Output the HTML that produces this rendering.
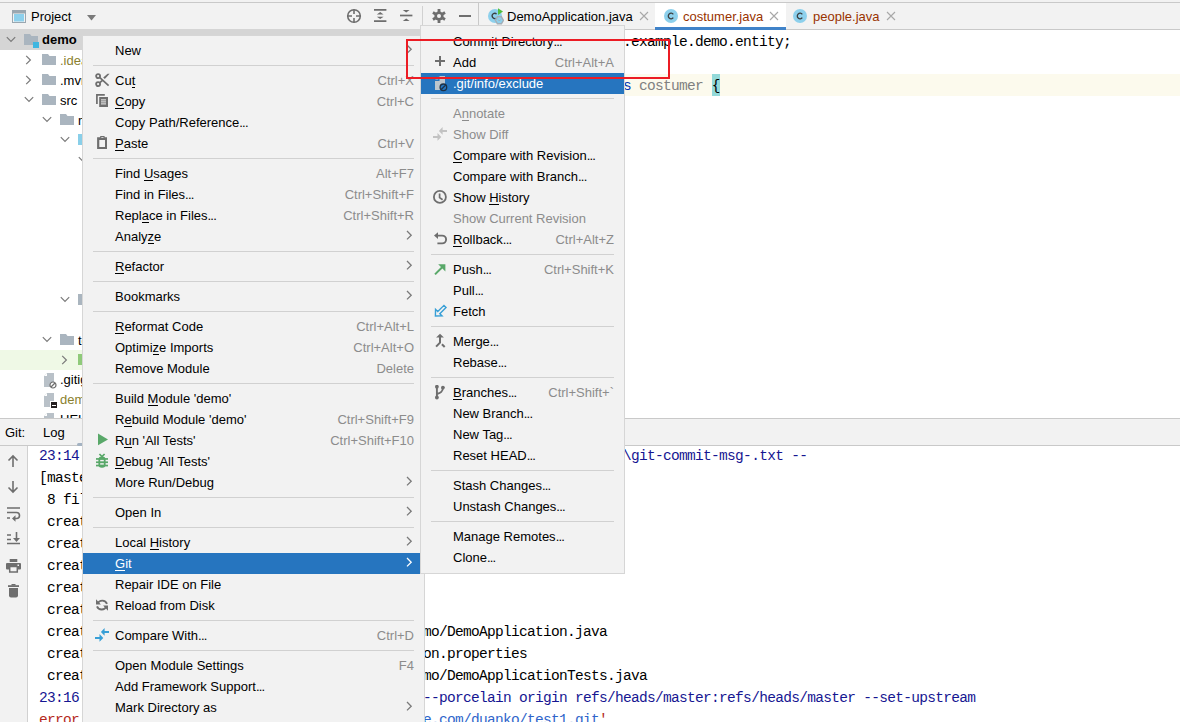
<!DOCTYPE html><html><head><meta charset="utf-8"><style>
*{margin:0;padding:0;box-sizing:border-box}
html,body{width:1180px;height:722px;overflow:hidden;background:#fff;font-family:"Liberation Sans",sans-serif;font-size:13px;color:#000}
body{position:relative}
.a{position:absolute}
.t{line-height:21px;white-space:nowrap}
.mono{position:absolute;font-family:"Liberation Mono",monospace;font-size:14.5px;letter-spacing:-0.7px;line-height:22px;white-space:pre}
.menu{position:absolute;background:#f2f2f2;border:1px solid #d6d6d6;overflow:hidden}
u{text-decoration:none;position:relative}
u:after{content:"";position:absolute;left:0;right:0;bottom:0;height:1px;background:currentColor}
</style></head><body>
<div class="a" style="left:0px;top:0px;width:1180px;height:2px;background:#f2f2f2"></div>
<div class="a" style="left:0px;top:2px;width:1180px;height:1px;background:#c9c9c9"></div>
<div class="a" style="left:0px;top:3px;width:478px;height:26px;background:#f2f2f2"></div>
<div class="a" style="left:478px;top:3px;width:702px;height:27px;background:#f2f2f2"></div>
<div class="a" style="left:478px;top:29px;width:702px;height:1px;background:#c9c9c9"></div>
<div class="a" style="left:478px;top:3px;width:1px;height:26px;background:#c9c9c9"></div>
<div class="a" style="left:655px;top:3px;width:131px;height:27px;background:#fff"></div>
<div class="a" style="left:655px;top:27px;width:131px;height:3px;background:#4083c9"></div>
<div class="a" style="left:0px;top:29px;width:540px;height:21px;background:#d5d5d5"></div>
<div class="a" style="left:540px;top:74px;width:640px;height:22px;background:#fcfaed"></div>
<div class="a" style="left:0px;top:418px;width:1180px;height:1px;background:#c9c9c9"></div>
<div class="a" style="left:0px;top:419px;width:1180px;height:26px;background:#f2f2f2"></div>
<div class="a" style="left:0px;top:445px;width:1180px;height:1px;background:#c9c9c9"></div>
<div class="a" style="left:0px;top:446px;width:27px;height:276px;background:#f2f2f2"></div>
<div class="a" style="left:27px;top:446px;width:1px;height:276px;background:#d1d1d1"></div>
<svg class="a" style="left:12px;top:10px" width="15" height="14" viewBox="0 0 15 14"><rect x="0.5" y="0.5" width="13" height="12" fill="#f2f2f2" stroke="#9aa7b0"/><rect x="0.5" y="0.5" width="13" height="3" fill="#9aa7b0"/><rect x="2" y="4" width="10" height="7.5" fill="#8dd0ec"/></svg>
<div class="a t" style="left:31px;top:6px;line-height:22px;color:#000">Project</div>
<svg class="a" style="left:87px;top:15px" width="9" height="6" viewBox="0 0 9 6"><path d="M0 0H9L4.5 5.5Z" fill="#7a7a7a"/></svg>
<svg class="a" style="left:346px;top:8px" width="16" height="16" viewBox="0 0 16 16"><circle cx="8" cy="8" r="6.3" fill="none" stroke="#6e6e6e" stroke-width="1.6"/><path d="M8 1.5V6M8 10V14.5M1.5 8H6M10 8H14.5" stroke="#6e6e6e" stroke-width="1.6"/></svg>
<svg class="a" style="left:374px;top:8px" width="13" height="15" viewBox="0 0 13 15"><path d="M0 1.9H12.4M0 13.2H12.4" stroke="#6e6e6e" stroke-width="1.7"/><path d="M2.8 6.4L6.2 4L9.6 6.4ZM2.8 8.7L6.2 11.1L9.6 8.7Z" fill="#6e6e6e"/></svg>
<svg class="a" style="left:400px;top:8px" width="13" height="15" viewBox="0 0 13 15"><path d="M0 7.5H12.4" stroke="#6e6e6e" stroke-width="1.7"/><path d="M2.8 2L6.2 4.6L9.6 2ZM2.8 13.1L6.2 10.5L9.6 13.1Z" fill="#6e6e6e"/></svg>
<div class="a" style="left:422px;top:6px;width:1px;height:20px;background:#d1d1d1"></div>
<svg class="a" style="left:432px;top:9px" width="14" height="14" viewBox="0 0 14 14"><g fill="#6e6e6e"><circle cx="7" cy="7" r="4.6"/><rect x="5.6" y="0" width="2.8" height="14"/><rect x="5.6" y="0" width="2.8" height="14" transform="rotate(60 7 7)"/><rect x="5.6" y="0" width="2.8" height="14" transform="rotate(120 7 7)"/></g><circle cx="7" cy="7" r="2" fill="#f2f2f2"/></svg>
<div class="a" style="left:459px;top:15px;width:12px;height:2px;background:#6e6e6e"></div>
<svg class="a" style="left:488px;top:8px" width="16" height="17" viewBox="0 0 16 17"><circle cx="7" cy="8" r="7" fill="#8dd0ec"/><path d="M8.6 6.1A2.6 2.6 0 1 0 7.6 10.4" fill="none" stroke="#3c3f41" stroke-width="1.3"/><path d="M10 0.2L15 3.6L10 7Z" fill="#4fbe3f"/><path d="M9.4 8.8L13.4 8.8L15.4 12.3L13.4 15.8L9.4 15.8L7.4 12.3Z" fill="#8dd0ec" stroke="#a3aeb7" stroke-width="1.4"/><path d="M10.2 11.6L11.4 13L12.6 11.6" fill="none" stroke="#a3aeb7" stroke-width="1"/></svg>
<div class="a t" style="left:507px;top:6px;color:#000">DemoApplication.java</div>
<svg class="a" style="left:639px;top:11px" width="10" height="10" viewBox="0 0 10 10"><path d="M1 1L9 9M9 1L1 9" stroke="#a8a8a8" stroke-width="1.1"/></svg>
<svg class="a" style="left:664px;top:9px" width="15" height="15" viewBox="0 0 15 15"><circle cx="7" cy="7" r="7" fill="#8dd0ec"/><path d="M9.3 5.3A2.8 2.8 0 1 0 9.3 8.7" fill="none" stroke="#3c3f41" stroke-width="1.3"/></svg>
<div class="a t" style="left:683px;top:6px;color:#993300">costumer.java</div>
<svg class="a" style="left:769px;top:11px" width="10" height="10" viewBox="0 0 10 10"><path d="M1 1L9 9M9 1L1 9" stroke="#a8a8a8" stroke-width="1.1"/></svg>
<svg class="a" style="left:793px;top:9px" width="15" height="15" viewBox="0 0 15 15"><circle cx="7" cy="7" r="7" fill="#8dd0ec"/><path d="M9.3 5.3A2.8 2.8 0 1 0 9.3 8.7" fill="none" stroke="#3c3f41" stroke-width="1.3"/></svg>
<div class="a t" style="left:813px;top:6px;color:#993300">people.java</div>
<svg class="a" style="left:886px;top:11px" width="10" height="10" viewBox="0 0 10 10"><path d="M1 1L9 9M9 1L1 9" stroke="#a8a8a8" stroke-width="1.1"/></svg>
<svg class="a" style="left:6px;top:36px" width="10" height="7" viewBox="0 0 10 7"><path d="M0.8 1.2L5 5.4L9.2 1.2" fill="none" stroke="#7a7a7a" stroke-width="1.2"/></svg>
<svg class="a" style="left:24px;top:34px" width="14" height="11" viewBox="0 0 14 11"><path d="M0 0H6L7.5 2H14V11H0Z" fill="#aab5bf"/></svg>
<div class="a" style="left:33px;top:42px;width:6px;height:6px;background:#40b6e0"></div>
<div class="a t" style="left:42px;top:29px;font-weight:bold">demo</div>
<svg class="a" style="left:25px;top:55px" width="7" height="10" viewBox="0 0 7 10"><path d="M1.2 0.8L5.4 5L1.2 9.2" fill="none" stroke="#7a7a7a" stroke-width="1.2"/></svg>
<svg class="a" style="left:42px;top:54px" width="14" height="11" viewBox="0 0 14 11"><path d="M0 0H6L7.5 2H14V11H0Z" fill="#aab5bf"/></svg>
<div class="a t" style="left:60px;top:50px;color:#8a7f2f">.idea</div>
<svg class="a" style="left:25px;top:75px" width="7" height="10" viewBox="0 0 7 10"><path d="M1.2 0.8L5.4 5L1.2 9.2" fill="none" stroke="#7a7a7a" stroke-width="1.2"/></svg>
<svg class="a" style="left:42px;top:74px" width="14" height="11" viewBox="0 0 14 11"><path d="M0 0H6L7.5 2H14V11H0Z" fill="#aab5bf"/></svg>
<div class="a t" style="left:60px;top:70px;color:#000">.mvn</div>
<svg class="a" style="left:24px;top:96px" width="10" height="7" viewBox="0 0 10 7"><path d="M0.8 1.2L5 5.4L9.2 1.2" fill="none" stroke="#7a7a7a" stroke-width="1.2"/></svg>
<svg class="a" style="left:42px;top:94px" width="14" height="11" viewBox="0 0 14 11"><path d="M0 0H6L7.5 2H14V11H0Z" fill="#aab5bf"/></svg>
<div class="a t" style="left:60px;top:90px;color:#000">src</div>
<svg class="a" style="left:42px;top:116px" width="10" height="7" viewBox="0 0 10 7"><path d="M0.8 1.2L5 5.4L9.2 1.2" fill="none" stroke="#7a7a7a" stroke-width="1.2"/></svg>
<svg class="a" style="left:60px;top:114px" width="14" height="11" viewBox="0 0 14 11"><path d="M0 0H6L7.5 2H14V11H0Z" fill="#aab5bf"/></svg>
<div class="a t" style="left:78px;top:110px;color:#000">main</div>
<svg class="a" style="left:60px;top:136px" width="10" height="7" viewBox="0 0 10 7"><path d="M0.8 1.2L5 5.4L9.2 1.2" fill="none" stroke="#7a7a7a" stroke-width="1.2"/></svg>
<svg class="a" style="left:78px;top:134px" width="14" height="11" viewBox="0 0 14 11"><path d="M0 0H6L7.5 2H14V11H0Z" fill="#89cfe9"/></svg>
<svg class="a" style="left:78px;top:156px" width="10" height="7" viewBox="0 0 10 7"><path d="M0.8 1.2L5 5.4L9.2 1.2" fill="none" stroke="#7a7a7a" stroke-width="1.2"/></svg>
<svg class="a" style="left:60px;top:296px" width="10" height="7" viewBox="0 0 10 7"><path d="M0.8 1.2L5 5.4L9.2 1.2" fill="none" stroke="#7a7a7a" stroke-width="1.2"/></svg>
<svg class="a" style="left:78px;top:294px" width="14" height="11" viewBox="0 0 14 11"><path d="M0 0H6L7.5 2H14V11H0Z" fill="#aab5bf"/></svg>
<svg class="a" style="left:42px;top:336px" width="10" height="7" viewBox="0 0 10 7"><path d="M0.8 1.2L5 5.4L9.2 1.2" fill="none" stroke="#7a7a7a" stroke-width="1.2"/></svg>
<svg class="a" style="left:60px;top:334px" width="14" height="11" viewBox="0 0 14 11"><path d="M0 0H6L7.5 2H14V11H0Z" fill="#aab5bf"/></svg>
<div class="a t" style="left:78px;top:330px">test</div>
<div class="a" style="left:0;top:350px;width:540px;height:20px;background:#eff9e6"></div>
<svg class="a" style="left:61px;top:355px" width="7" height="10" viewBox="0 0 7 10"><path d="M1.2 0.8L5.4 5L1.2 9.2" fill="none" stroke="#7a7a7a" stroke-width="1.2"/></svg>
<svg class="a" style="left:78px;top:354px" width="14" height="11" viewBox="0 0 14 11"><path d="M0 0H6L7.5 2H14V11H0Z" fill="#8fca7a"/></svg>
<svg class="a" style="left:44px;top:373px" width="11" height="14" viewBox="0 0 11 14"><path d="M0 3L3 0H10V14H0Z" fill="#b9c1c8"/><path d="M0 3L3 0V3Z" fill="#fff"/></svg>
<svg class="a" style="left:49px;top:381px" width="8" height="8" viewBox="0 0 8 8"><circle cx="4" cy="4" r="3" fill="#fff" stroke="#6e6e6e" stroke-width="1.2"/><path d="M2 6L6 2" stroke="#6e6e6e" stroke-width="1.2"/></svg>
<div class="a t" style="left:60px;top:369px">.gitignore</div>
<svg class="a" style="left:44px;top:393px" width="11" height="14" viewBox="0 0 11 14"><path d="M0 3L3 0H10V14H0Z" fill="#b9c1c8"/><path d="M0 3L3 0V3Z" fill="#fff"/></svg>
<div class="a" style="left:50px;top:401px;width:8px;height:8px;background:#fff"></div><div class="a" style="left:51px;top:402px;width:6px;height:6px;background:#231f20"></div><div class="a" style="left:52px;top:405px;width:4px;height:1px;background:#fff"></div>
<div class="a t" style="left:60px;top:389px;color:#8a7f2f">demo.iml</div>
<svg class="a" style="left:44px;top:413px" width="11" height="14" viewBox="0 0 11 14"><path d="M0 3L3 0H10V14H0Z" fill="#b9c1c8"/><path d="M0 3L3 0V3Z" fill="#fff"/></svg>
<div class="a t" style="left:60px;top:409px">HELP.md</div>
<div class="a" style="left:0;top:418px;width:1180px;height:1px;background:#c9c9c9"></div>
<div class="a" style="left:0;top:419px;width:1180px;height:26px;background:#f2f2f2"></div>
<div class="a" style="left:0;top:445px;width:1180px;height:1px;background:#c9c9c9"></div>
<div class="a t" style="left:5px;top:422px">Git:</div>
<div class="a t" style="left:43px;top:422px">Log</div>
<div class="a" style="left:77px;top:443px;width:8px;height:3px;border-radius:1.5px;background:#a3b2c2"></div>
<svg class="a" style="left:7px;top:454px" width="12" height="14" viewBox="0 0 12 14"><path d="M6 13V2M1.5 6.5L6 2L10.5 6.5" fill="none" stroke="#6e6e6e" stroke-width="1.6"/></svg>
<svg class="a" style="left:7px;top:480px" width="12" height="14" viewBox="0 0 12 14"><path d="M6 1V12M1.5 7.5L6 12L10.5 7.5" fill="none" stroke="#6e6e6e" stroke-width="1.6"/></svg>
<svg class="a" style="left:7px;top:507px" width="14" height="15" viewBox="0 0 14 15"><path d="M0 1H13M0 5.5H9.5A3 3 0 0 1 9.5 11.5H7M0 11H3" fill="none" stroke="#6e6e6e" stroke-width="1.6"/><path d="M5 11.5L8.5 8.3V14.7Z" fill="#6e6e6e"/></svg>
<svg class="a" style="left:7px;top:532px" width="14" height="14" viewBox="0 0 14 14"><path d="M0 3H4M0 7.5H4M0 11.5H13M9.5 0V8" fill="none" stroke="#6e6e6e" stroke-width="1.6"/><path d="M6 6L9.5 10L13 6Z" fill="#6e6e6e"/></svg>
<svg class="a" style="left:6px;top:559px" width="15" height="14" viewBox="0 0 15 14"><rect x="3.7" y="0" width="7.6" height="3" fill="#6e6e6e"/><rect x="0" y="4" width="15" height="6.5" rx="1" fill="#6e6e6e"/><rect x="3.7" y="7.5" width="7.6" height="5.5" fill="#f2f2f2" stroke="#6e6e6e" stroke-width="1.5"/><rect x="11.5" y="5.5" width="1.5" height="1.5" fill="#f2f2f2"/></svg>
<svg class="a" style="left:8px;top:584px" width="11" height="14" viewBox="0 0 11 14"><rect x="0" y="1.2" width="11" height="1.8" fill="#6e6e6e"/><rect x="3.5" y="0" width="4" height="1.5" fill="#6e6e6e"/><path d="M1 4H10V11.5Q10 13.5 8 13.5H3Q1 13.5 1 11.5Z" fill="#6e6e6e"/></svg>
<div class="a" style="left:712px;top:74px;width:8px;height:22px;background:#93d9d9"></div>
<div class="mono" style="left:535px;top:31px"><span style="color:#0033b3">package</span> com.example.demo.entity;</div>
<div class="mono" style="left:535px;top:75px"><span style="color:#0033b3">public class</span> <span style="color:#808080">costumer</span> <span style="position:relative;left:0.6px">{</span></div>
<div class="mono" style="left:39px;top:445px"><span style="color:#161692">23:14:38.785: [demo] git -c credential.helper= -c core.quotepath=false -c\git-commit-msg-.txt --</span>
[master (root-commit) 4a6c2b1] first commit
 8 files changed, 442 insertions(+)
 create mode 100644 .gitignore
 create mode 100644 .mvn/wrapper/maven-wra
 create mode 100644 .mvn/wrapper/maven-wrapp
 create mode 100644 mvnw
 create mode 100644 mvnw.cmd
 create mode 100644 src/main/java/com/example/demo/DemoApplication.java
 create mode 100644 src/main/resources/application.properties
 create mode 100644 src/test/java/com/example/demo/DemoApplicationTests.java
<span style="color:#161692">23:16:02.114: [demo] git -c credential.helper= ---porcelain origin refs/heads/master:refs/heads/master --set-upstream</span>
<span style="color:#b52a1e">error: failed to push some refs to 'xxxxx-xxgite</span><span style="color:#2f65ca">e.com/duanko/test1.git</span><span style="color:#b52a1e">'</span></div>
<div class="menu" style="left:82px;top:35px;width:343px;height:700px">
<div class="a t" style="left:32px;top:4px;color:#000">New</div>
<svg class="a" style="left:323px;top:8px" width="7" height="11" viewBox="0 0 7 11"><path d="M1 1L5.2 5.2L1 9.4" fill="none" stroke="#7a7a7a" stroke-width="1.3"/></svg>
<div class="a" style="left:10px;top:29px;width:321px;height:1px;background:#d1d1d1"></div>
<div class="a t" style="left:32px;top:34px;color:#000">Cu<u>t</u></div>
<div class="a t" style="right:10px;top:34px;color:#8c8c8c">Ctrl+X</div>
<svg class="a" style="left:12px;top:37px" width="16" height="16" viewBox="0 0 16 16"><circle cx="3.1" cy="3.1" r="2" fill="none" stroke="#6e6e6e" stroke-width="1.8"/><circle cx="3.1" cy="11.1" r="2" fill="none" stroke="#6e6e6e" stroke-width="1.8"/><path d="M4.6 4.4L13.6 12.6M4.6 9.8L7.4 7.4" stroke="#6e6e6e" stroke-width="1.7"/><path d="M8.2 4.6L12.6 0.8H14.6L9.8 6Z" fill="#6e6e6e"/></svg>
<div class="a t" style="left:32px;top:55px;color:#000"><u>C</u>opy</div>
<div class="a t" style="right:10px;top:55px;color:#8c8c8c">Ctrl+C</div>
<svg class="a" style="left:12px;top:57px" width="16" height="16" viewBox="0 0 16 16"><path d="M1.9 11V1.8H9.8" fill="none" stroke="#6e6e6e" stroke-width="1.7"/><rect x="4.2" y="4" width="8.8" height="10" fill="#6e6e6e"/><path d="M6 6.9h5M6 8.9h5M6 10.9h5" stroke="#f2f2f2" stroke-width="1"/></svg>
<div class="a t" style="left:32px;top:76px;color:#000">Copy Path/Reference<span style="letter-spacing:-0.8px">..</span>.</div>
<div class="a t" style="left:32px;top:97px;color:#000"><u>P</u>aste</div>
<div class="a t" style="right:10px;top:97px;color:#8c8c8c">Ctrl+V</div>
<svg class="a" style="left:13px;top:99px" width="16" height="16" viewBox="0 0 16 16"><path fill-rule="evenodd" d="M1.1 2.3H4.2V1H8.6V2.3H11V14H1.1Z M3.3 4.9V11.9H9V4.9Z M5.3 1.9V2.7H7.5V1.9Z" fill="#6e6e6e"/></svg>
<div class="a" style="left:10px;top:122px;width:321px;height:1px;background:#d1d1d1"></div>
<div class="a t" style="left:32px;top:127px;color:#000">Find <u>U</u>sages</div>
<div class="a t" style="right:10px;top:127px;color:#8c8c8c">Alt+F7</div>
<div class="a t" style="left:32px;top:148px;color:#000">Find in Files<span style="letter-spacing:-0.8px">..</span>.</div>
<div class="a t" style="right:10px;top:148px;color:#8c8c8c">Ctrl+Shift+F</div>
<div class="a t" style="left:32px;top:169px;color:#000">Repl<u>a</u>ce in Files<span style="letter-spacing:-0.8px">..</span>.</div>
<div class="a t" style="right:10px;top:169px;color:#8c8c8c">Ctrl+Shift+R</div>
<div class="a t" style="left:32px;top:190px;color:#000">Analy<u>z</u>e</div>
<svg class="a" style="left:323px;top:194px" width="7" height="11" viewBox="0 0 7 11"><path d="M1 1L5.2 5.2L1 9.4" fill="none" stroke="#7a7a7a" stroke-width="1.3"/></svg>
<div class="a" style="left:10px;top:215px;width:321px;height:1px;background:#d1d1d1"></div>
<div class="a t" style="left:32px;top:220px;color:#000"><u>R</u>efactor</div>
<svg class="a" style="left:323px;top:224px" width="7" height="11" viewBox="0 0 7 11"><path d="M1 1L5.2 5.2L1 9.4" fill="none" stroke="#7a7a7a" stroke-width="1.3"/></svg>
<div class="a" style="left:10px;top:245px;width:321px;height:1px;background:#d1d1d1"></div>
<div class="a t" style="left:32px;top:250px;color:#000">Bookmarks</div>
<svg class="a" style="left:323px;top:254px" width="7" height="11" viewBox="0 0 7 11"><path d="M1 1L5.2 5.2L1 9.4" fill="none" stroke="#7a7a7a" stroke-width="1.3"/></svg>
<div class="a" style="left:10px;top:275px;width:321px;height:1px;background:#d1d1d1"></div>
<div class="a t" style="left:32px;top:280px;color:#000"><u>R</u>eformat Code</div>
<div class="a t" style="right:10px;top:280px;color:#8c8c8c">Ctrl+Alt+L</div>
<div class="a t" style="left:32px;top:301px;color:#000">Optimi<u>z</u>e Imports</div>
<div class="a t" style="right:10px;top:301px;color:#8c8c8c">Ctrl+Alt+O</div>
<div class="a t" style="left:32px;top:322px;color:#000">Remove Module</div>
<div class="a t" style="right:10px;top:322px;color:#8c8c8c">Delete</div>
<div class="a" style="left:10px;top:347px;width:321px;height:1px;background:#d1d1d1"></div>
<div class="a t" style="left:32px;top:352px;color:#000">Build <u>M</u>odule 'demo'</div>
<div class="a t" style="left:32px;top:373px;color:#000">R<u>e</u>build Module 'demo'</div>
<div class="a t" style="right:10px;top:373px;color:#8c8c8c">Ctrl+Shift+F9</div>
<div class="a t" style="left:32px;top:394px;color:#000">R<u>u</u>n 'All Tests'</div>
<div class="a t" style="right:10px;top:394px;color:#8c8c8c">Ctrl+Shift+F10</div>
<svg class="a" style="left:13px;top:397px" width="16" height="16" viewBox="0 0 16 16"><path d="M2 0.5L12 6.4L2 12.3Z" fill="#59a869"/></svg>
<div class="a t" style="left:32px;top:415px;color:#000"><u>D</u>ebug 'All Tests'</div>
<svg class="a" style="left:13px;top:417px" width="16" height="16" viewBox="0 0 16 16"><g fill="#59a869"><path d="M3.4 1L6 3.6L8.6 1" fill="none" stroke="#59a869" stroke-width="1.7"/><rect x="2.4" y="3.4" width="7.2" height="11.3" rx="3.4" ry="3"/><rect x="0" y="5.1" width="12" height="1.7"/><rect x="0" y="8.4" width="12" height="1.7"/><rect x="0" y="11.7" width="12" height="1.7"/></g><rect x="4.2" y="6.9" width="3.6" height="1.4" fill="#f2f2f2"/><rect x="4.2" y="10.2" width="3.6" height="1.4" fill="#f2f2f2"/></svg>
<div class="a t" style="left:32px;top:436px;color:#000">More Run/Debug</div>
<svg class="a" style="left:323px;top:440px" width="7" height="11" viewBox="0 0 7 11"><path d="M1 1L5.2 5.2L1 9.4" fill="none" stroke="#7a7a7a" stroke-width="1.3"/></svg>
<div class="a" style="left:10px;top:461px;width:321px;height:1px;background:#d1d1d1"></div>
<div class="a t" style="left:32px;top:466px;color:#000">Open In</div>
<svg class="a" style="left:323px;top:470px" width="7" height="11" viewBox="0 0 7 11"><path d="M1 1L5.2 5.2L1 9.4" fill="none" stroke="#7a7a7a" stroke-width="1.3"/></svg>
<div class="a" style="left:10px;top:491px;width:321px;height:1px;background:#d1d1d1"></div>
<div class="a t" style="left:32px;top:496px;color:#000">Local <u>H</u>istory</div>
<svg class="a" style="left:323px;top:500px" width="7" height="11" viewBox="0 0 7 11"><path d="M1 1L5.2 5.2L1 9.4" fill="none" stroke="#7a7a7a" stroke-width="1.3"/></svg>
<div class="a" style="left:0;top:517px;width:343px;height:21px;background:#2675bf"></div>
<div class="a t" style="left:32px;top:517px;color:#fff"><u>G</u>it</div>
<svg class="a" style="left:323px;top:521px" width="7" height="11" viewBox="0 0 7 11"><path d="M1 1L5.2 5.2L1 9.4" fill="none" stroke="#fff" stroke-width="1.3"/></svg>
<div class="a t" style="left:32px;top:538px;color:#000">Repair IDE on File</div>
<div class="a t" style="left:32px;top:559px;color:#000">Reload from Disk</div>
<svg class="a" style="left:13px;top:561px" width="16" height="16" viewBox="0 0 16 16"><path d="M1.6 6.6A5.1 5.1 0 0 1 11 6.8M1 9.3A5.1 5.1 0 0 0 10.4 9.4" fill="none" stroke="#6e6e6e" stroke-width="1.9"/><path d="M0 2.3V7.4H4.9Z M12 13.7V8.6H7.1Z" fill="#6e6e6e"/></svg>
<div class="a" style="left:10px;top:584px;width:321px;height:1px;background:#d1d1d1"></div>
<div class="a t" style="left:32px;top:589px;color:#000">Compare With<span style="letter-spacing:-0.8px">..</span>.</div>
<div class="a t" style="right:10px;top:589px;color:#8c8c8c">Ctrl+D</div>
<svg class="a" style="left:12px;top:592px" width="16" height="16" viewBox="0 0 16 16"><path d="M5.9 3.9L9.6 0V2.9H14V4.9H9.6V7.8Z M8.3 9.9L4.5 6V8.9H0V10.9H4.5V13.8Z" fill="#389fd6"/></svg>
<div class="a" style="left:10px;top:614px;width:321px;height:1px;background:#d1d1d1"></div>
<div class="a t" style="left:32px;top:619px;color:#000">Open Module Settings</div>
<div class="a t" style="right:10px;top:619px;color:#8c8c8c">F4</div>
<div class="a t" style="left:32px;top:640px;color:#000">Add Framework Support<span style="letter-spacing:-0.8px">..</span>.</div>
<div class="a t" style="left:32px;top:661px;color:#000">Mark Directory as</div>
<svg class="a" style="left:323px;top:665px" width="7" height="11" viewBox="0 0 7 11"><path d="M1 1L5.2 5.2L1 9.4" fill="none" stroke="#7a7a7a" stroke-width="1.3"/></svg>
</div>
<div class="menu" style="left:420px;top:25px;width:205px;height:549px">
<div class="a t" style="left:32px;top:5px;color:#000">Comm<u>i</u>t Directory<span style="letter-spacing:-0.8px">..</span>.</div>
<div class="a t" style="left:32px;top:26px;color:#000">Add</div>
<div class="a t" style="right:10px;top:26px;color:#8c8c8c">Ctrl+Alt+A</div>
<svg class="a" style="left:14px;top:30px" width="16" height="16" viewBox="0 0 16 16"><path d="M5 0v10M0 5h10" stroke="#6e6e6e" stroke-width="2"/></svg>
<div class="a" style="left:0;top:47px;width:205px;height:21px;background:#2675bf"></div>
<div class="a t" style="left:32px;top:47px;color:#fff">.git/info/exclude</div>
<svg class="a" style="left:14px;top:50px" width="16" height="16" viewBox="0 0 16 16"><path d="M0 5H4.5V0H10V14H0Z" fill="#bcc5cd"/><path d="M0.2 3.4L3.2 0.4V3.4Z" fill="#bcc5cd"/><circle cx="8.4" cy="11.3" r="3.3" fill="#2675bf" stroke="#1d3045" stroke-width="1.3"/><path d="M6.2 13.5L10.6 9.1" stroke="#1d3045" stroke-width="1.3"/></svg>
<div class="a" style="left:10px;top:72px;width:183px;height:1px;background:#d1d1d1"></div>
<div class="a t" style="left:32px;top:77px;color:#8c8c8c">A<u>n</u>notate</div>
<div class="a t" style="left:32px;top:98px;color:#8c8c8c">Show Diff</div>
<svg class="a" style="left:12px;top:101px" width="16" height="16" viewBox="0 0 16 16"><path d="M5.9 3.9L9.6 0V2.9H14V4.9H9.6V7.8Z M8.3 9.9L4.5 6V8.9H0V10.9H4.5V13.8Z" fill="#c2c2c2"/></svg>
<div class="a t" style="left:32px;top:119px;color:#000"><u>C</u>ompare with Revision<span style="letter-spacing:-0.8px">..</span>.</div>
<div class="a t" style="left:32px;top:140px;color:#000">Compare with Branch<span style="letter-spacing:-0.8px">..</span>.</div>
<div class="a t" style="left:32px;top:161px;color:#000">Show <u>H</u>istory</div>
<svg class="a" style="left:12px;top:164px" width="16" height="16" viewBox="0 0 16 16"><circle cx="6.9" cy="6.9" r="6" fill="none" stroke="#6e6e6e" stroke-width="1.8"/><path d="M6.6 3.6V7.6L9.6 9.8" fill="none" stroke="#6e6e6e" stroke-width="1.7"/></svg>
<div class="a t" style="left:32px;top:182px;color:#8c8c8c">Show Current Revision</div>
<div class="a t" style="left:32px;top:203px;color:#000"><u>R</u>ollback<span style="letter-spacing:-0.8px">..</span>.</div>
<div class="a t" style="right:10px;top:203px;color:#8c8c8c">Ctrl+Alt+Z</div>
<svg class="a" style="left:13px;top:206px" width="16" height="16" viewBox="0 0 16 16"><path d="M3 3.6H8.2A3.9 3.9 0 0 1 8.2 11.4H3.4" fill="none" stroke="#6e6e6e" stroke-width="1.9"/><path d="M0 3.6L4 0.2V7Z" fill="#6e6e6e"/></svg>
<div class="a" style="left:10px;top:228px;width:183px;height:1px;background:#d1d1d1"></div>
<div class="a t" style="left:32px;top:233px;color:#000">Push<span style="letter-spacing:-0.8px">..</span>.</div>
<div class="a t" style="right:10px;top:233px;color:#8c8c8c">Ctrl+Shift+K</div>
<svg class="a" style="left:13px;top:238px" width="16" height="16" viewBox="0 0 16 16"><path d="M1 10.4L9.2 2.2" stroke="#59a869" stroke-width="2"/><path d="M4.2 0.2H11.4V7.4Z" fill="#59a869"/></svg>
<div class="a t" style="left:32px;top:254px;color:#000">Pull<span style="letter-spacing:-0.8px">..</span>.</div>
<div class="a t" style="left:32px;top:275px;color:#000">Fetch</div>
<svg class="a" style="left:12px;top:277px" width="16" height="16" viewBox="0 0 16 16"><path d="M10.97 2.37 L4.77 8.58 L2.54 6.35 L2.40 13.00 L9.05 12.86 L6.82 10.63 L13.03 4.43Z" fill="none" stroke="#389fd6" stroke-width="1.4" stroke-linejoin="miter"/></svg>
<div class="a" style="left:10px;top:300px;width:183px;height:1px;background:#d1d1d1"></div>
<div class="a t" style="left:32px;top:305px;color:#000">Merge<span style="letter-spacing:-0.8px">..</span>.</div>
<svg class="a" style="left:14px;top:307px" width="16" height="16" viewBox="0 0 16 16"><path d="M5 4V9.6L1.1 13.6M6.9 11.3L9.7 14" fill="none" stroke="#6e6e6e" stroke-width="2"/><path d="M1.1 4.6L5 0.8L8.9 4.6Z" fill="#6e6e6e"/></svg>
<div class="a t" style="left:32px;top:326px;color:#000">Rebase<span style="letter-spacing:-0.8px">..</span>.</div>
<div class="a" style="left:10px;top:351px;width:183px;height:1px;background:#d1d1d1"></div>
<div class="a t" style="left:32px;top:356px;color:#000"><u>B</u>ranches<span style="letter-spacing:-0.8px">..</span>.</div>
<div class="a t" style="right:10px;top:356px;color:#8c8c8c">Ctrl+Shift+`</div>
<svg class="a" style="left:14px;top:359px" width="16" height="16" viewBox="0 0 16 16"><path d="M1.9 1.6V12.5M7.9 2.5C7.9 6.8 5.6 7.8 1.9 9" fill="none" stroke="#6e6e6e" stroke-width="1.9"/><circle cx="1.9" cy="1.7" r="1.9" fill="#6e6e6e"/><circle cx="7.9" cy="2.6" r="1.9" fill="#6e6e6e"/><circle cx="1.9" cy="12.5" r="1.9" fill="#6e6e6e"/></svg>
<div class="a t" style="left:32px;top:377px;color:#000">New Branch<span style="letter-spacing:-0.8px">..</span>.</div>
<div class="a t" style="left:32px;top:398px;color:#000">New Tag<span style="letter-spacing:-0.8px">..</span>.</div>
<div class="a t" style="left:32px;top:419px;color:#000">Reset HEAD<span style="letter-spacing:-0.8px">..</span>.</div>
<div class="a" style="left:10px;top:444px;width:183px;height:1px;background:#d1d1d1"></div>
<div class="a t" style="left:32px;top:449px;color:#000">Stash Changes<span style="letter-spacing:-0.8px">..</span>.</div>
<div class="a t" style="left:32px;top:470px;color:#000">Unstash Changes<span style="letter-spacing:-0.8px">..</span>.</div>
<div class="a" style="left:10px;top:495px;width:183px;height:1px;background:#d1d1d1"></div>
<div class="a t" style="left:32px;top:500px;color:#000">Manage Remotes<span style="letter-spacing:-0.8px">..</span>.</div>
<div class="a t" style="left:32px;top:521px;color:#000">Clone<span style="letter-spacing:-0.8px">..</span>.</div>
</div>
<div class="a" style="left:406px;top:39px;width:264px;height:40px;border:2px solid #ec1c24"></div>
</body></html>
